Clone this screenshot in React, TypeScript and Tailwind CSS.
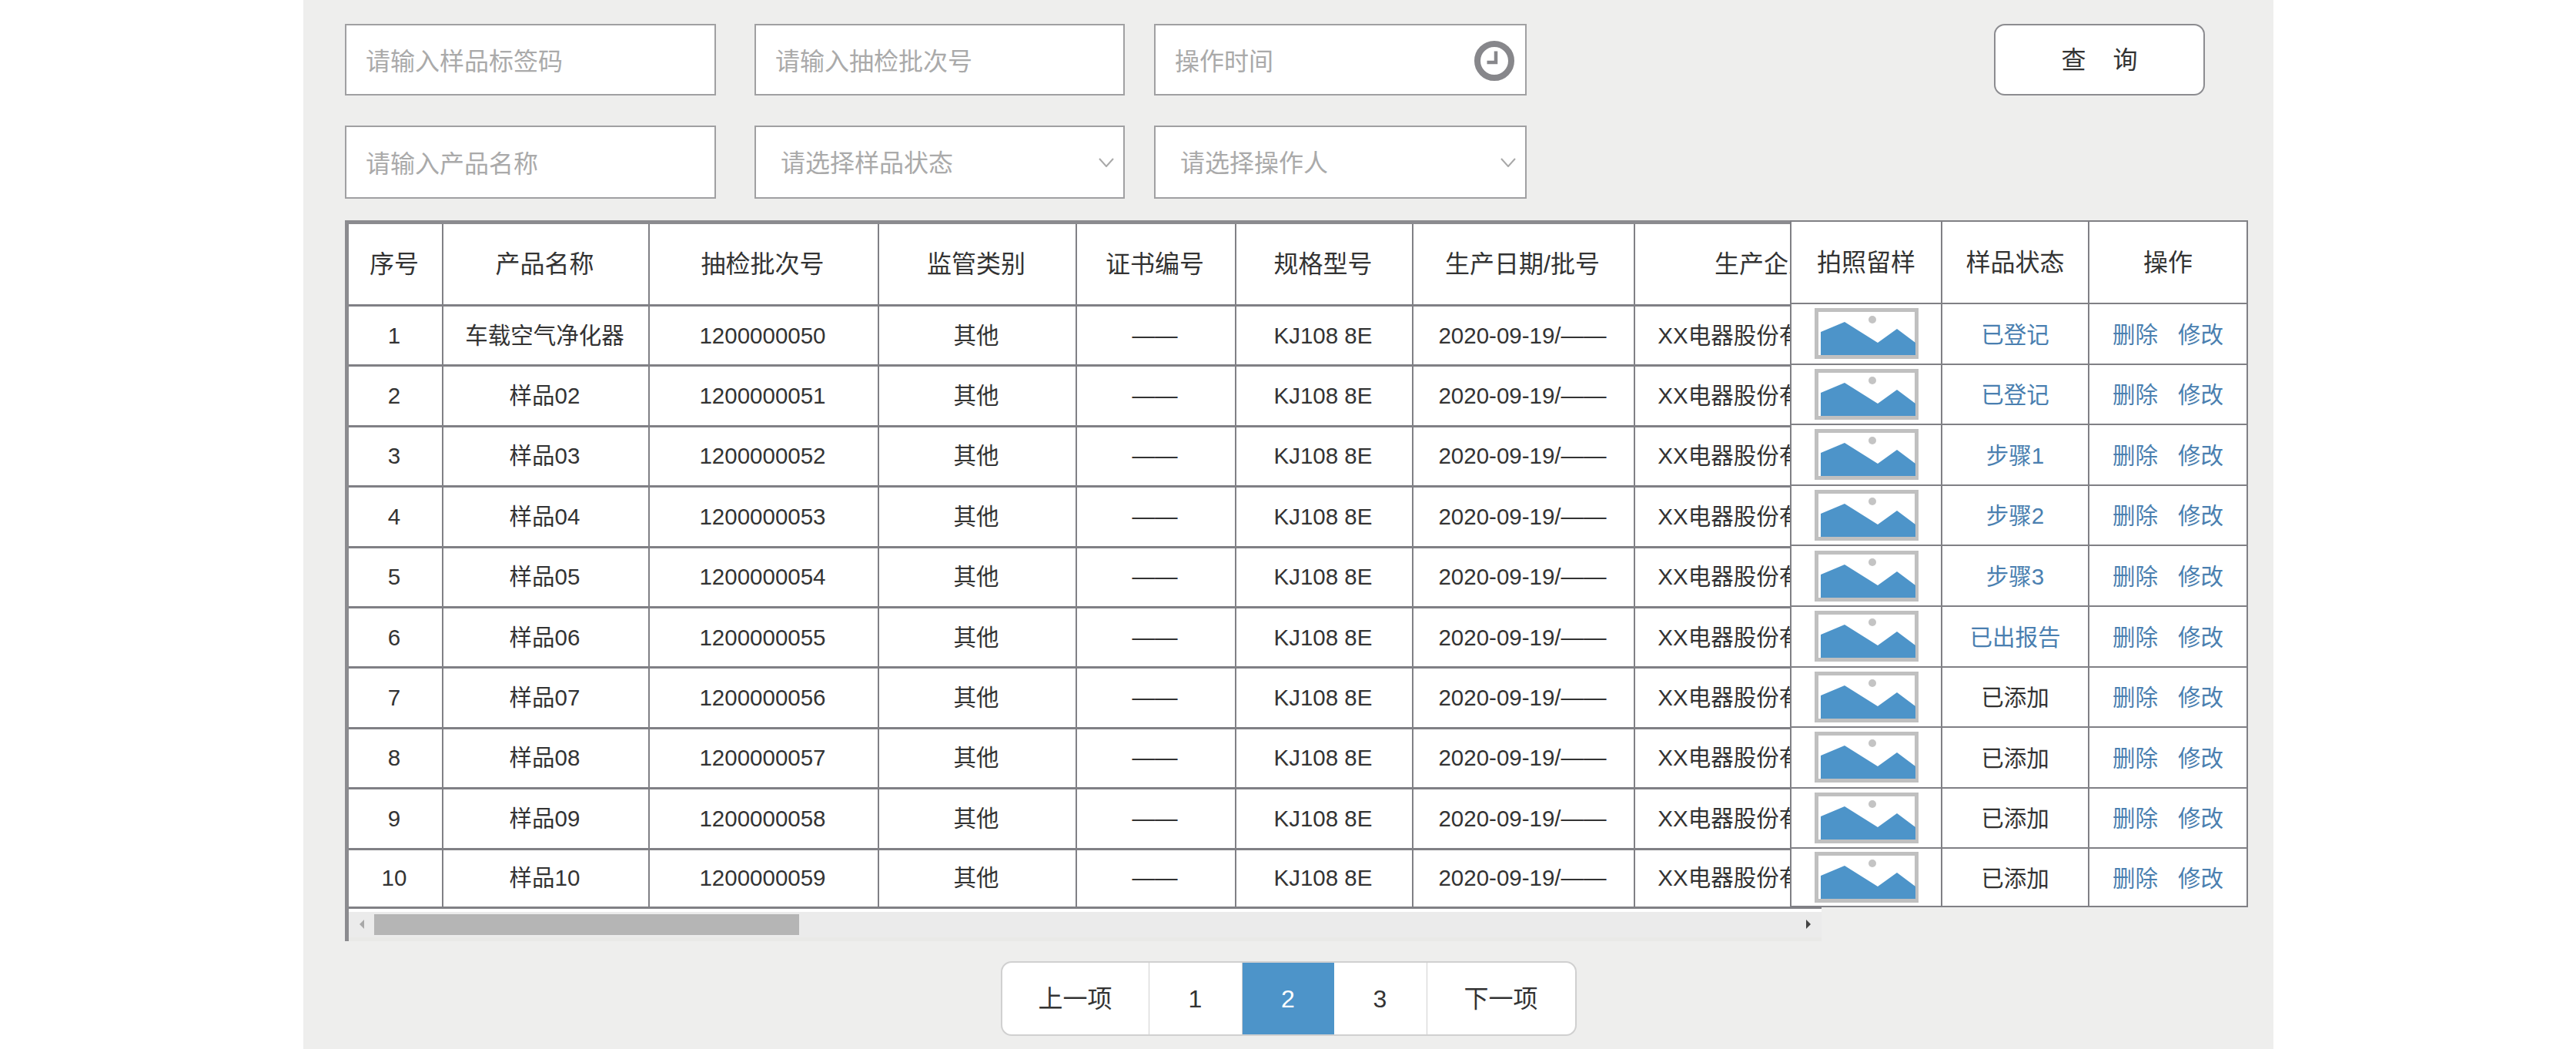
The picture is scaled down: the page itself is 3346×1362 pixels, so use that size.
import React from 'react'

const rows = [
  { name: '车载空气净化器', status: '已登记', done: true },
  { name: '样品02', status: '已登记', done: true },
  { name: '样品03', status: '步骤1', done: true },
  { name: '样品04', status: '步骤2', done: true },
  { name: '样品05', status: '步骤3', done: true },
  { name: '样品06', status: '已出报告', done: true },
  { name: '样品07', status: '已添加', done: false },
  { name: '样品08', status: '已添加', done: false },
  { name: '样品09', status: '已添加', done: false },
  { name: '样品10', status: '已添加', done: false },
]

const headers = ['序号', '产品名称', '抽检批次号', '监管类别', '证书编号', '规格型号', '生产日期/批号', '生产企业']
const colWidths = ['w-[123px]', 'w-[268px]', 'w-[298px]', 'w-[257px]', 'w-[207px]', 'w-[230px]', 'w-[288px]', 'w-[339px]']

const rowHeight = (i: number) => (i === rows.length - 1 ? 'h-[76px]' : 'h-[78.4px]')
const fixedRowHeight = (i: number) => (i === rows.length - 1 ? 'h-[76px]' : 'h-[78.6px]')

const mainCell = 'pr-[3px] border-r-2 border-b-[3px] border-[#808085]'
const fixedCell = 'border-r-2 border-b-2 border-[#808085]'

const Chevron = () => (
  <svg width="20" height="12" viewBox="0 0 20 12" className="shrink-0">
    <polyline points="1,1 10,11 19,1" fill="none" stroke="#a8a8a8" strokeWidth="2" />
  </svg>
)

const ClockIcon = () => (
  <svg width="52" height="52" viewBox="0 0 52 52" className="absolute right-[16px] top-[22px]">
    <circle cx="26" cy="26" r="22" fill="#fff" stroke="#87878b" strokeWidth="8" />
    <path d="M28 13.5 V28 H16.5" fill="none" stroke="#87878b" strokeWidth="4.5" />
  </svg>
)

const TextInput = ({ placeholder, width, height }: { placeholder: string; width: string; height: string }) => (
  <input
    type="text"
    placeholder={placeholder}
    className={`${width} ${height} pl-[25px] pt-[5px] bg-white border-2 border-[#a0a0a2] text-[32px] placeholder:text-[#aaaaaa] outline-none`}
  />
)

const SelectBox = ({ label, width }: { label: string; width: string }) => (
  <div className={`${width} h-[95px] flex items-center justify-between pl-[32px] pr-[12px] bg-white border-2 border-[#a0a0a2]`}>
    <span className="pt-[2px] text-[32px] text-[#aaaaaa]">{label}</span>
    <Chevron />
  </div>
)

const Thumbnail = () => (
  <svg width="135" height="66" viewBox="0 0 135 66" className="mx-auto block">
    <rect x="2.5" y="2.5" width="130" height="61" fill="#fff" stroke="#c0c0c0" strokeWidth="5" />
    <polygon points="8,31 39,18 82,45 107,27 131,45 131,61 8,61" fill="#4d94c9" />
    <circle cx="75" cy="15" r="5" fill="#c4c4c4" />
  </svg>
)

export default function App() {
  return (
    <div className="h-[1362px] overflow-hidden bg-white font-['Liberation_Sans','Noto_Sans_CJK_SC',sans-serif] text-[#333333]">
      <div className="ml-[394px] w-[2559px] h-full bg-[#eeeeed] pt-[31px] pl-[54px]">
        {/* Filters */}
        <div className="flex">
          <TextInput placeholder="请输入样品标签码" width="w-[482px]" height="h-[93px]" />
          <div className="ml-[50px]">
            <TextInput placeholder="请输入抽检批次号" width="w-[481px]" height="h-[93px]" />
          </div>
          <div className="relative ml-[38px]">
            <TextInput placeholder="操作时间" width="w-[484px]" height="h-[93px]" />
            <ClockIcon />
          </div>
          <button className="ml-[607px] w-[274px] h-[93px] flex items-center justify-center gap-[35px] bg-white border-2 border-[#8c8c90] rounded-[14px] text-[32px]">
            <span>查</span>
            <span>询</span>
          </button>
        </div>
        <div className="flex mt-[39px]">
          <TextInput placeholder="请输入产品名称" width="w-[482px]" height="h-[95px]" />
          <div className="ml-[50px]">
            <SelectBox label="请选择样品状态" width="w-[481px]" />
          </div>
          <div className="ml-[38px]">
            <SelectBox label="请选择操作人" width="w-[484px]" />
          </div>
        </div>

        {/* Table */}
        <div className="relative mt-[28px] w-[2472px]">
          <div className="w-[1918px] border-l-[5px] border-t-[5px] border-[#8b8b8f]">
            <div className="overflow-hidden bg-white pb-[4px]">
              <table className="table-fixed w-[2010px] border-separate border-spacing-0 text-center">
                <thead>
                  <tr className="h-[107px] text-[32px]">
                    {headers.map((h, i) => (
                      <th key={h} className={`${colWidths[i]} font-normal ${mainCell}`}>
                        {h}
                      </th>
                    ))}
                  </tr>
                </thead>
                <tbody className="text-[29.5px]">
                  {rows.map((r, i) => (
                    <tr key={i} className={rowHeight(i)}>
                      <td className={mainCell}>{i + 1}</td>
                      <td className={mainCell}>{r.name}</td>
                      <td className={mainCell}>{1200000050 + i}</td>
                      <td className={mainCell}>其他</td>
                      <td className={mainCell}>——</td>
                      <td className={mainCell}>KJ108 8E</td>
                      <td className={mainCell}>2020-09-19/——</td>
                      <td className={`${mainCell} whitespace-nowrap`}>XX电器股份有限公司</td>
                    </tr>
                  ))}
                </tbody>
              </table>
            </div>

            {/* Scrollbar */}
            <div className="h-[33px] flex items-center bg-[#ebebeb] pl-[14px] pr-[14px]">
              <svg width="6" height="12" viewBox="0 0 6 12" className="shrink-0">
                <polygon points="6,0 0,6 6,12" fill="#a8a8a8" />
              </svg>
              <div className="ml-[13px] w-[552px] h-[27px] bg-[#b5b5b5]" />
              <svg width="6" height="12" viewBox="0 0 6 12" className="ml-auto shrink-0">
                <polygon points="0,0 6,6 0,12" fill="#444444" />
              </svg>
            </div>
            <div className="h-[5px] bg-[#e9e9e7]" />
          </div>

          {/* Fixed right columns, over the scrolling table */}
          <table className="absolute left-[1877px] top-0 table-fixed w-[595px] border-separate border-spacing-0 border-t-2 border-l-2 bg-white border-[#808085] text-center">
            <thead>
              <tr className="h-[107px] text-[32px]">
                <th className={`w-[196px] font-normal ${fixedCell}`}>拍照留样</th>
                <th className={`w-[191px] font-normal ${fixedCell}`}>样品状态</th>
                <th className={`w-[206px] font-normal ${fixedCell}`}>操作</th>
              </tr>
            </thead>
            <tbody className="text-[29.5px]">
              {rows.map((r, i) => (
                <tr key={i} className={fixedRowHeight(i)}>
                  <td className={fixedCell}>
                    <Thumbnail />
                  </td>
                  <td className={`${fixedCell} pt-[3px] ${r.done ? 'text-[#4a7fb0]' : ''}`}>{r.status}</td>
                  <td className={`${fixedCell} pt-[3px] text-[#4a7fb0]`}>
                    <span>删除</span>
                    <span className="ml-[26px]">修改</span>
                  </td>
                </tr>
              ))}
            </tbody>
          </table>
        </div>

        {/* Pagination */}
        <div className="mt-[26px] w-[2451px] flex justify-center">
          <div className="flex h-[97px] border-2 border-[#d0d0d0] rounded-[14px] overflow-hidden bg-white text-[32px] text-center leading-[95px]">
            <div className="w-[191px] border-r border-[#d0d0d0]">上一项</div>
            <div className="w-[121px] border-r border-[#d0d0d0]">1</div>
            <div className="w-[119px] bg-[#4d94c9] text-white">2</div>
            <div className="w-[121px] border-r border-[#d0d0d0]">3</div>
            <div className="w-[192px]">下一项</div>
          </div>
        </div>
      </div>
    </div>
  )
}
